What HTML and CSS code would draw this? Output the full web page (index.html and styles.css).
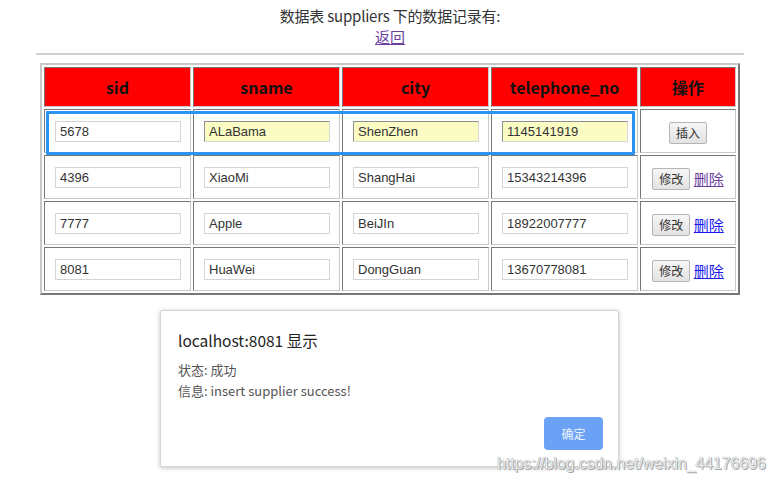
FILE: index.html
```html
<!DOCTYPE html>
<html>
<head>
<meta charset="utf-8">
<link rel="stylesheet" href="styles.css">
</head>
<body>
<div class="top">
  <div class="title">数据表 suppliers 下的数据记录有:</div>
  <a class="back" href="#">返回</a>
</div>
<hr class="rule">
<div class="table-wrap">
  <table class="grid">
    <thead>
      <tr><th class="c-sid">sid</th><th class="c-col">sname</th><th class="c-col">city</th><th class="c-col">telephone_no</th><th class="c-op">操作</th></tr>
    </thead>
    <tbody>
      <tr>
        <td><input class="field" value="5678"></td>
        <td><input class="field fill" value="ALaBama"></td>
        <td><input class="field fill" value="ShenZhen"></td>
        <td><input class="field fill" value="1145141919"></td>
        <td class="op"><button class="btn">插入</button></td>
      </tr>
      <tr>
        <td><input class="field" value="4396"></td>
        <td><input class="field" value="XiaoMi"></td>
        <td><input class="field" value="ShangHai"></td>
        <td><input class="field" value="15343214396"></td>
        <td class="op"><button class="btn">修改</button> <a class="del visited" href="#">删除</a></td>
      </tr>
      <tr>
        <td><input class="field" value="7777"></td>
        <td><input class="field" value="Apple"></td>
        <td><input class="field" value="BeiJIn"></td>
        <td><input class="field" value="18922007777"></td>
        <td class="op"><button class="btn">修改</button> <a class="del" href="#">删除</a></td>
      </tr>
      <tr>
        <td><input class="field" value="8081"></td>
        <td><input class="field" value="HuaWei"></td>
        <td><input class="field" value="DongGuan"></td>
        <td><input class="field" value="13670778081"></td>
        <td class="op"><button class="btn">修改</button> <a class="del" href="#">删除</a></td>
      </tr>
    </tbody>
  </table>
  <div class="focus-ring"></div>
</div>

<div class="dialog">
  <div class="d-title">localhost:8081 显示</div>
  <div class="d-line">状态: 成功</div>
  <div class="d-line">信息: insert supplier success!</div>
  <div class="d-actions"><button class="d-ok">确定</button></div>
</div>

<div class="watermark">https://blog.csdn.net/weixin_44176696</div>
</body>
</html>
```

FILE: styles.css
```css
html, body {
  margin: 0;
  padding: 0;
  background: #ffffff;
}
body {
  width: 780px;
  height: 483px;
  position: relative;
  overflow: hidden;
  font-family: "Noto Sans CJK SC", "Noto Sans", sans-serif;
  color: #222;
}
.top {
  display: flex;
  flex-direction: column;
  align-items: center;
  padding-top: 5px;
}
.title {
  font-size: 15px;
  line-height: 22px;
  color: #333;
  letter-spacing: -0.2px;
}
.back {
  font-size: 15px;
  line-height: 20px;
  color: #6b3fa0;
  text-decoration: underline;
}
.rule {
  margin: 6px 36px 0;
  border: 0;
  height: 2px;
  background: #d0d0d0;
}
.table-wrap {
  position: relative;
  width: 700px;
  margin: 8px auto 0;
}
.grid {
  border-collapse: separate;
  border-spacing: 2px;
  border: 2px solid;
  border-color: #c8c8c8 #777 #777 #c8c8c8;
  width: 700px;
  table-layout: fixed;
}
.grid th, .grid td {
  border: 1px solid;
  border-color: #777 #c8c8c8 #c8c8c8 #777;
  padding: 0;
  text-align: center;
}
.grid th {
  background: #ff0000;
  height: 38px;
  font-size: 16px;
  font-weight: bold;
  color: #111;
}
.c-sid, .c-col { width: 145px; }
.c-op { width: 94px; }
.grid td {
  height: 42px;
}
.field {
  box-sizing: border-box;
  width: 126px;
  height: 21px;
  border: 1px solid #d4d4d4;
  padding: 0 4px;
  font-family: "Liberation Sans", Arial, sans-serif;
  font-size: 13px;
  color: #333;
  background: #fff;
  display: block;
  margin: 0 auto 0 10px;
}
.field.fill {
  background: #fafcc4;
  border-color: #8e8e8e #d8d8d8 #d8d8d8 #8e8e8e;
}
.op {
  white-space: nowrap;
}
.btn {
  font-family: "Noto Sans CJK SC", sans-serif;
  font-size: 12px;
  line-height: 16px;
  padding: 2px 6px;
  color: #333;
  background: linear-gradient(#f6f6f6, #e2e2e2);
  border: 1px solid #b5b5b5;
  border-radius: 2px;
  vertical-align: middle;
}
.del {
  font-size: 15px;
  color: #1a1aee;
  text-decoration: underline;
  vertical-align: middle;
}
.del.visited {
  color: #6b3fa0;
}
.focus-ring {
  position: absolute;
  left: 6px;
  top: 48px;
  width: 583px;
  height: 38px;
  border: 3px solid #2a95f0;
  border-radius: 1px;
  pointer-events: none;
}
.dialog {
  position: absolute;
  left: 160px;
  top: 310px;
  width: 459px;
  height: 157px;
  box-sizing: border-box;
  background: #fff;
  border: 1px solid #d6d6d6;
  border-radius: 2px;
  box-shadow: 0 1px 4px rgba(0,0,0,0.25);
  padding: 18px 15px 0 17px;
  display: flex;
  flex-direction: column;
}
.d-title {
  font-size: 15.5px;
  line-height: 22px;
  color: #222;
  margin-bottom: 8px;
}
.d-line {
  font-size: 13px;
  line-height: 21px;
  color: #555;
}
.d-actions {
  display: flex;
  justify-content: flex-end;
  margin-top: 16px;
}
.d-ok {
  width: 59px;
  height: 33px;
  border: 0;
  border-radius: 4px;
  background: #6ca2f5;
  color: #eef4ff;
  font-family: "Noto Sans CJK SC", sans-serif;
  font-size: 12px;
}
.watermark {
  position: absolute;
  left: 497px;
  top: 455px;
  font-family: "Liberation Sans", Arial, sans-serif;
  font-size: 15.8px;
  color: #ececec;
  text-shadow: 0 0 1px #888, 1px 1px 0 #aaa;
}
```
